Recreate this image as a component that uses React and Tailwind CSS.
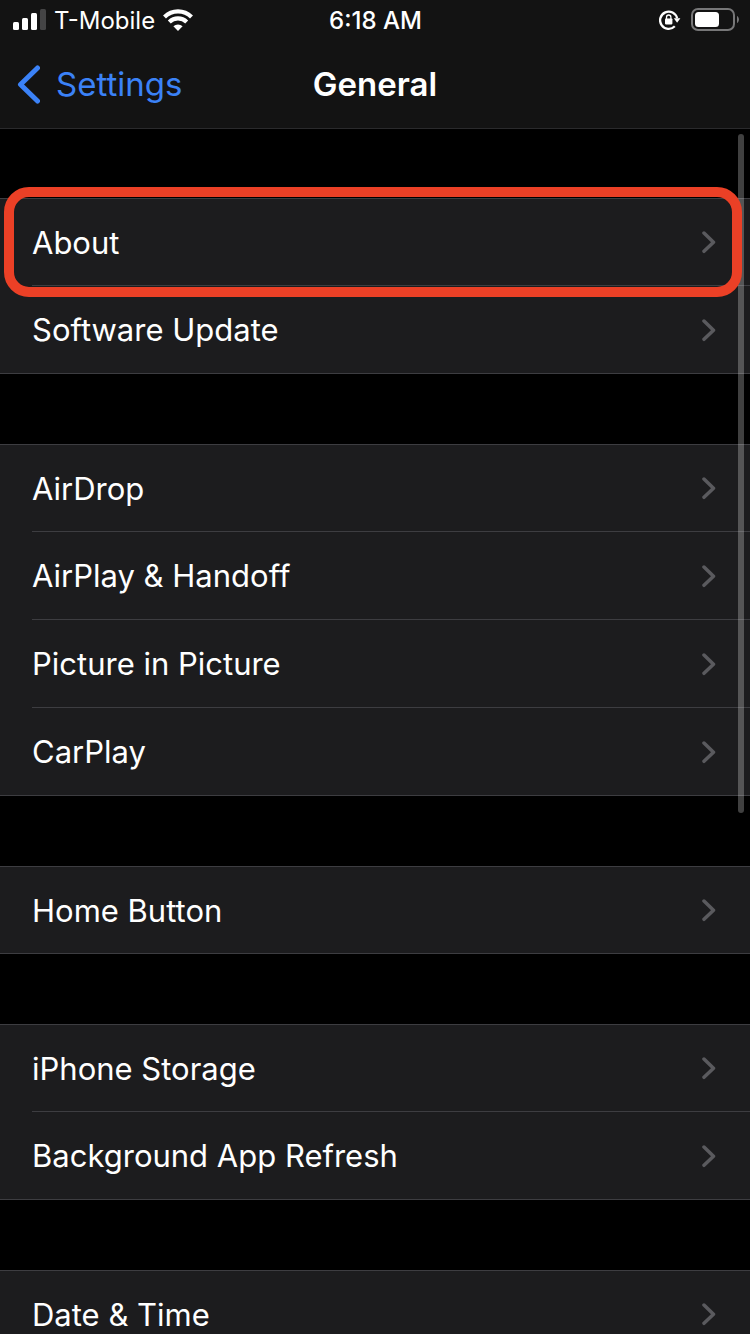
const groups = [
  ["About", "Software Update"],
  ["AirDrop", "AirPlay & Handoff", "Picture in Picture", "CarPlay"],
  ["Home Button"],
  ["iPhone Storage", "Background App Refresh"],
  ["Date & Time"],
];

function SignalIcon() {
  return (
    <svg width="34" height="22" viewBox="0 0 34 22" fill="#fff" aria-hidden="true">
      <rect x="1" y="13" width="6" height="8" rx="1.5" />
      <rect x="10" y="9" width="6" height="12" rx="1.5" />
      <rect x="19" y="4" width="6" height="17" rx="1.5" />
      <rect x="28" y="0" width="6" height="21" rx="1.5" fill="#444445" />
    </svg>
  );
}

function WifiIcon() {
  return (
    <svg width="30" height="22" viewBox="0 0 30 22" aria-hidden="true">
      <g fill="none" stroke="#fff" strokeWidth="4.2">
        <path d="M1.500 7.900A19.400 19.400 0 0 1 28.500 7.900" />
        <path d="M6.300 12.900A12.600 12.600 0 0 1 23.700 12.900" />
      </g>
      <path d="M15 22l-4.600-4.700a6.600 6.600 0 0 1 9.200 0z" fill="#fff" />
    </svg>
  );
}

function RotationLockIcon() {
  return (
    <svg width="22" height="20" viewBox="0 0 22 20" aria-hidden="true">
      <path d="M15.800 16.300A8.600 8.600 0 1 1 18.100 8.300" fill="none" stroke="#fff" strokeWidth="2.300" />
      <path d="M14.800 8.200h6.600l-3.300 4.600z" fill="#fff" />
      <rect x="6" y="8.400" width="7.400" height="6" rx="0.800" fill="#fff" />
      <path d="M7.500 9V7.200a2.200 2.200 0 0 1 4.400 0V9" fill="none" stroke="#fff" strokeWidth="1.300" />
    </svg>
  );
}

function BatteryIcon() {
  return (
    <svg width="48" height="24" viewBox="0 0 48 24" aria-hidden="true">
      <rect x="1" y="1" width="42" height="21" rx="6" fill="none" stroke="#777778" strokeWidth="2" />
      <rect x="4" y="4" width="24" height="15" rx="3.5" fill="#fff" />
      <path d="M46 8c2.600 1.200 2.600 5.800 0 7z" fill="#777778" />
    </svg>
  );
}

function BackIcon() {
  return (
    <svg width="24" height="40" viewBox="0 0 24 40" fill="none" aria-hidden="true">
      <path d="M21.500 4L4.500 20.500L21.500 37" stroke="#3b82f7" strokeWidth="5" strokeLinecap="round" strokeLinejoin="round" />
    </svg>
  );
}

function Chevron() {
  return (
    <svg width="14" height="24" viewBox="0 0 14 24" fill="none" aria-hidden="true">
      <path d="M2 3L11.500 12.200L2 21.300" stroke="#5a5a5e" strokeWidth="3.500" strokeLinecap="round" strokeLinejoin="round" />
    </svg>
  );
}

function Row({ label, first, last, highlighted }) {
  return (
    <li className={`relative h-[88px] ${first ? "border-t border-[#3d3d41]" : ""} ${last ? "border-b border-[#3d3d41]" : "pl-8"}`}>
      <a
        href="#"
        className={`flex h-full items-center justify-between pr-[34px] ${last ? "pl-8" : "border-b border-[#3d3d41]"}`}
      >
        <span className="pt-0.5">{label}</span>
        <Chevron />
      </a>
      {highlighted && (
        <span className="pointer-events-none absolute -top-3 right-2 -bottom-[11px] left-1 z-20 rounded-[25px] border-[10px] border-[#eb4026]" />
      )}
    </li>
  );
}

export default function App() {
  return (
    <div className="flex h-screen flex-col overflow-hidden bg-black font-['Inter','Liberation_Sans',sans-serif] text-white">
      <header className="shrink-0 border-b border-[#2a2a2c] bg-[#131313]">
        <div className="grid h-10 grid-cols-[1fr_auto_1fr] items-center pr-[11px] pl-3 text-[24px]">
          <div className="flex items-center gap-2">
            <SignalIcon />
            <span className="pt-0.5">T-Mobile</span>
            <WifiIcon />
          </div>
          <time className="pt-0.5 font-medium">6:18 AM</time>
          <div className="flex items-center justify-end gap-2.5">
            <RotationLockIcon />
            <BatteryIcon />
          </div>
        </div>
        <nav className="grid h-[88px] grid-cols-[1fr_auto_1fr] items-center px-4 text-[33px]">
          <a href="#" className="flex items-center gap-4 text-[#3b82f7]">
            <BackIcon />
            <span className="pt-0.5">Settings</span>
          </a>
          <h1 className="pt-0.5 font-semibold">General</h1>
        </nav>
      </header>
      <div className="relative min-h-0 flex-1">
        <main className="flex h-full flex-col gap-[70px] overflow-y-auto pt-[69px] text-[31px] [scrollbar-width:none]">
          {groups.map((items, g) => (
            <ul key={items[0]} className="shrink-0 bg-[#1c1c1e]">
              {items.map((label, i) => (
                <Row
                  key={label}
                  label={label}
                  first={i === 0}
                  last={i === items.length - 1}
                  highlighted={g === 0 && i === 0}
                />
              ))}
            </ul>
          ))}
        </main>
        <div className="pointer-events-none absolute top-[5px] right-1.5 z-10 h-[679px] w-1.5 rounded-full bg-white/25" />
      </div>
    </div>
  );
}
